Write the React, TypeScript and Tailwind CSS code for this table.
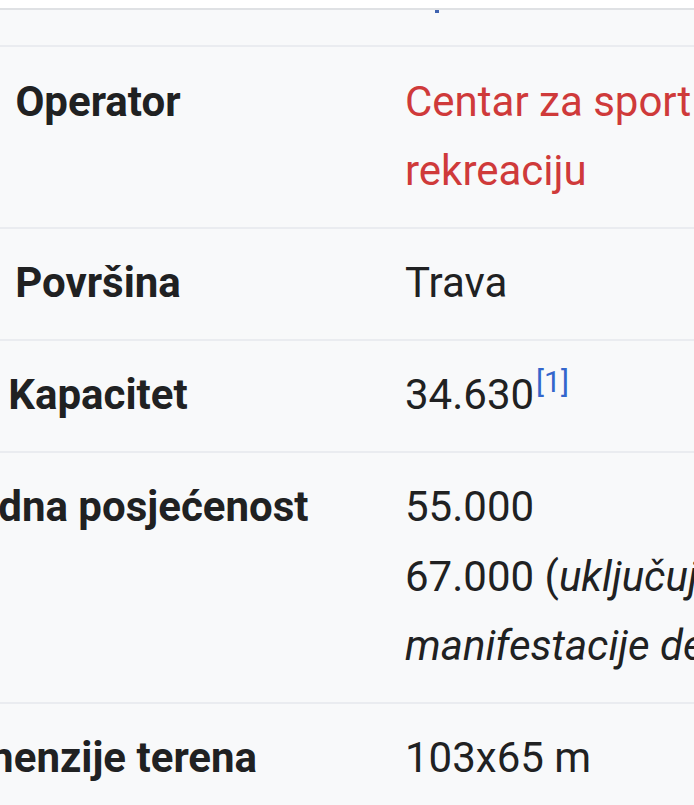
import React from "react";

const font = { fontFamily: "Roboto, 'Noto Sans', Arial, sans-serif" };

function Row({
  label,
  children,
}: {
  label: string;
  children: React.ReactNode;
}) {
  return (
    <div className="flex border-b-2 border-[#eaecf0]">
      <div className="w-[196px] shrink-0 flex justify-center pt-[19.5px] pb-[21px]">
        <span className="whitespace-nowrap font-bold text-[42px] leading-[69.5px] text-[#202122]">
          {label}
        </span>
      </div>
      <div className="ml-[209px] pt-[19.5px] pb-[21px] whitespace-nowrap text-[42px] leading-[69.5px] text-[#202122]">
        {children}
      </div>
    </div>
  );
}

export default function App() {
  return (
    <div
      className="w-[694px] h-[805px] overflow-hidden bg-[#f8f9fa]"
      style={font}
    >
      <div className="h-[8px] bg-white" />
      <div className="h-[2px] bg-[#dfe1e4]" />
      <div className="h-[37px] border-b-2 border-[#eaecf0]">
        <div className="ml-[435px] w-[4px] h-[3px] bg-[#3f63b0]" />
      </div>
      <Row label="Operator">
        <span className="text-[#cf3a3a]">
          Centar za sport i
          <br />
          rekreaciju
        </span>
      </Row>
      <Row label="Površina">Trava</Row>
      <Row label="Kapacitet">
        34.630
        <sup className="text-[30px] leading-none align-[17px] text-[#3366cc] ml-[2px] top-0">
          [1]
        </sup>
      </Row>
      <Row label="Rekordna posjećenost">
        55.000
        <br />
        67.000 (<i>uključujući</i>
        <br />
        <i>manifestacije dešavanja</i>)
      </Row>
      <Row label="Dimenzije terena">103x65 m</Row>
    </div>
  );
}
